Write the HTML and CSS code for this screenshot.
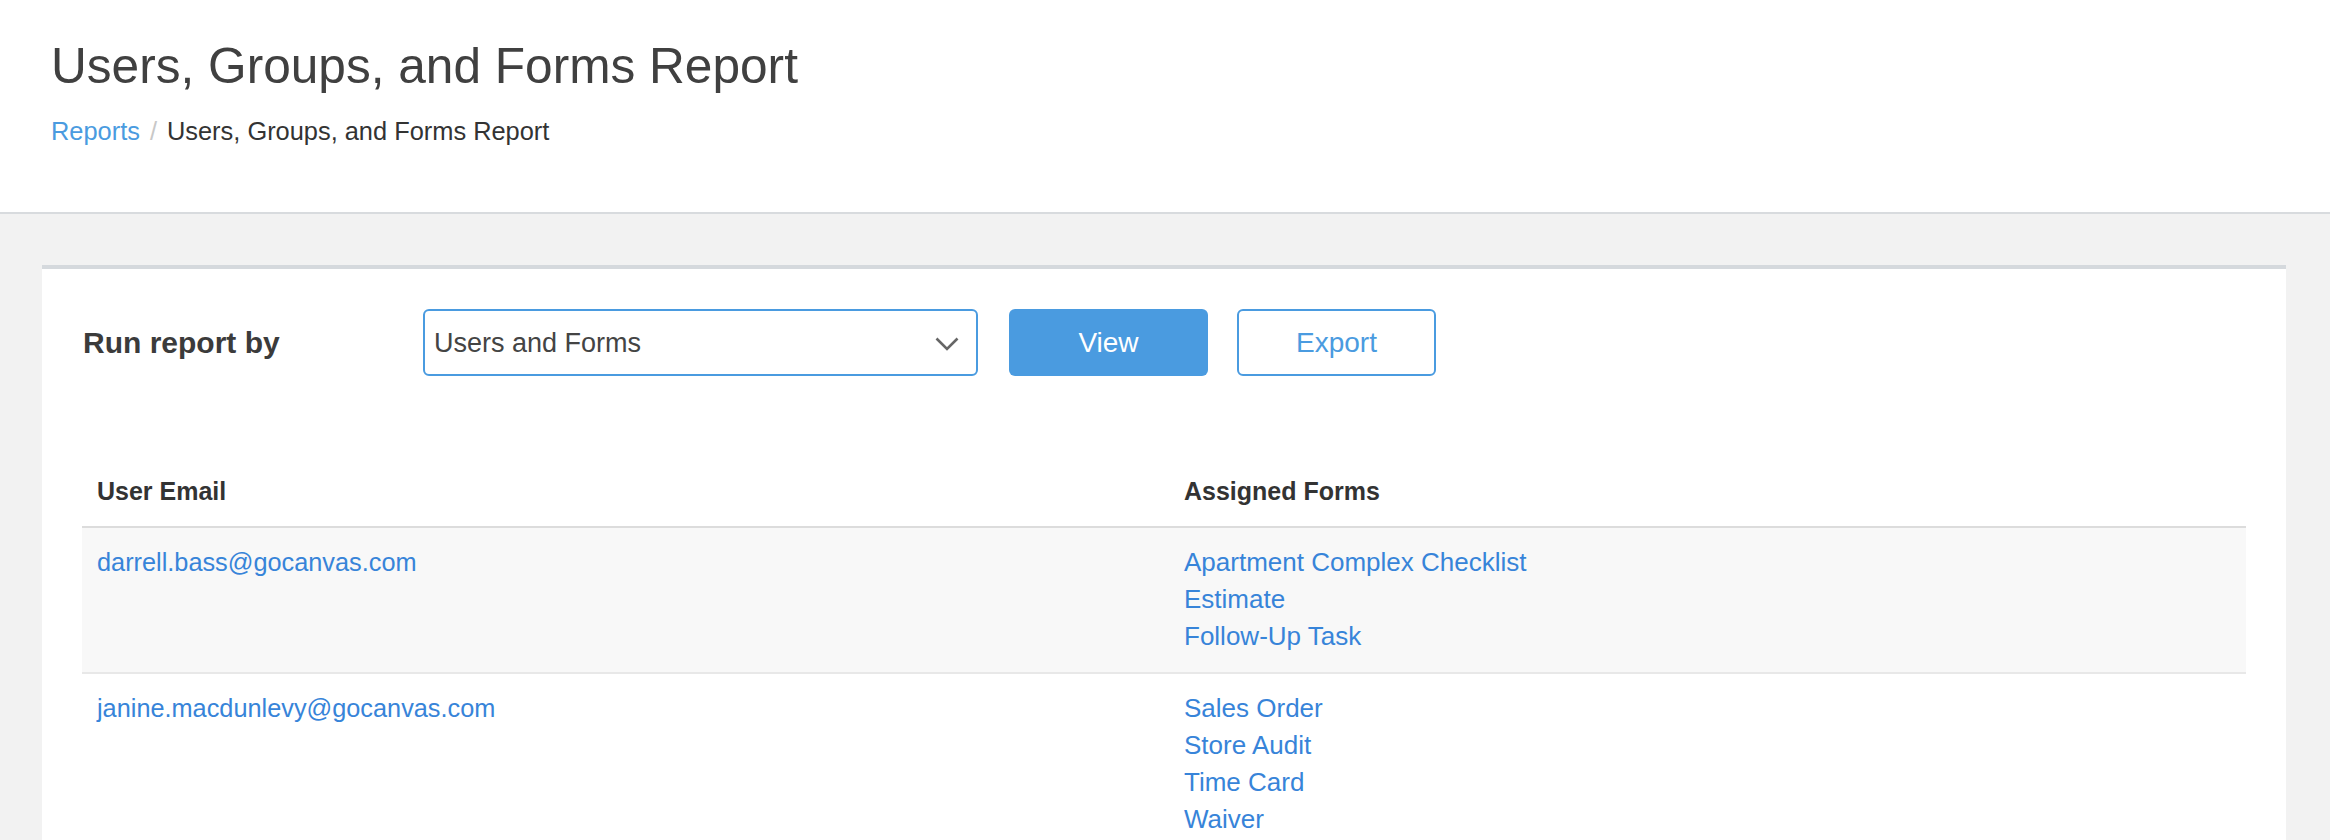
FILE: index.html
```html
<!DOCTYPE html>
<html lang="en">
<head>
<meta charset="utf-8">
<title>Users, Groups, and Forms Report</title>
<link rel="stylesheet" href="styles.css">
</head>
<body>
<header class="page-header">
  <h1 class="page-title">Users, Groups, and Forms Report</h1>
  <nav class="breadcrumb">
    <a class="crumb-link" href="#">Reports</a><span class="crumb-sep">/</span><span class="crumb-current">Users, Groups, and Forms Report</span>
  </nav>
</header>
<main class="content">
  <section class="panel">
    <div class="controls">
      <div class="run-label">Run report by</div>
      <div class="select">
        <span class="select-text">Users and Forms</span>
        <svg class="chevron" width="24" height="14" viewBox="0 0 24 14"><polyline points="1.5,1.5 12,12 22.5,1.5" fill="none" stroke="#666" stroke-width="2.6"/></svg>
      </div>
      <button class="btn btn-primary">View</button>
      <button class="btn btn-outline">Export</button>
    </div>
    <div class="report-table">
      <div class="tr th-row">
        <div class="cell th">User Email</div>
        <div class="cell th">Assigned Forms</div>
      </div>
      <div class="tr row odd">
        <div class="cell"><a class="link email" href="#">darrell.bass@gocanvas.com</a></div>
        <div class="cell list">
          <a class="link" href="#">Apartment Complex Checklist</a>
          <a class="link" href="#">Estimate</a>
          <a class="link" href="#">Follow-Up Task</a>
        </div>
      </div>
      <div class="tr row">
        <div class="cell"><a class="link email" href="#">janine.macdunlevy@gocanvas.com</a></div>
        <div class="cell list">
          <a class="link" href="#">Sales Order</a>
          <a class="link" href="#">Store Audit</a>
          <a class="link" href="#">Time Card</a>
          <a class="link" href="#">Waiver</a>
        </div>
      </div>
    </div>
  </section>
</main>
</body>
</html>
```

FILE: styles.css
```css
* { box-sizing: border-box; }
html, body { margin: 0; padding: 0; }
body {
  background: #f2f2f2;
  font-family: "Liberation Sans", Arial, sans-serif;
  color: #333;
  height: 840px;
  overflow: hidden;
}
a { text-decoration: none; }

.page-header {
  background: #fff;
  height: 214px;
  padding: 36px 0 0 51px;
  border-bottom: 2px solid #d8dbde;
}
.page-title {
  margin: 0;
  font-size: 49.6px;
  line-height: 60px;
  font-weight: normal;
  color: #404040;
}
.breadcrumb {
  margin-top: 20px;
  font-size: 25.4px;
  line-height: 30px;
  display: flex;
}
.crumb-link { color: #4a9be0; }
.crumb-sep { color: #c8c8c8; margin: 0 10px; }
.crumb-current { color: #333; }

.content { padding: 51px 44px 0 42px; }
.panel {
  background: #fff;
  border-top: 4px solid #d5d9dd;
  padding: 40px 40px 0 40px;
  height: 575px;
  overflow: hidden;
}

.controls {
  display: flex;
  align-items: center;
  height: 67px;
}
.run-label {
  width: 341px;
  font-size: 30px;
  line-height: 36px;
  font-weight: bold;
  color: #3b3b3b;
  padding-left: 1px;
}
.select {
  width: 555px;
  height: 67px;
  border: 2px solid #4a9be0;
  border-radius: 6px;
  display: flex;
  align-items: center;
  justify-content: space-between;
  padding: 0 17px 0 9px;
}
.select-text {
  font-size: 27px;
  line-height: 30px;
  color: #444;
}
.chevron { display: block; margin-top: 2px; }
.btn {
  width: 199px;
  height: 67px;
  border-radius: 6px;
  font-family: "Liberation Sans", Arial, sans-serif;
  font-size: 28px;
  line-height: 32px;
  padding: 0;
  cursor: pointer;
}
.btn-primary {
  margin-left: 31px;
  background: #4a9be0;
  border: 0;
  color: #fff;
}
.btn-outline {
  margin-left: 29px;
  background: #fff;
  border: 2px solid #4a9be0;
  color: #4a9be0;
}

.report-table { margin-top: 80px; }
.tr {
  display: grid;
  grid-template-columns: 1087px 1fr;
}
.th-row { border-bottom: 2px solid #dcdcdc; }
.cell { padding: 0 15px; }
.th {
  font-size: 25px;
  line-height: 30px;
  font-weight: bold;
  color: #333;
  padding-top: 20px;
  padding-bottom: 20px;
}
.row {
  border-bottom: 2px solid #e8e8e8;
  padding: 16px 0 17px;
}
.row.odd { background: #f8f8f8; }
.link {
  display: block;
  color: #3784d9;
  font-size: 26px;
  line-height: 37px;
}
.link.email { font-size: 25.3px; }
.list { display: flex; flex-direction: column; align-items: flex-start; }
```
